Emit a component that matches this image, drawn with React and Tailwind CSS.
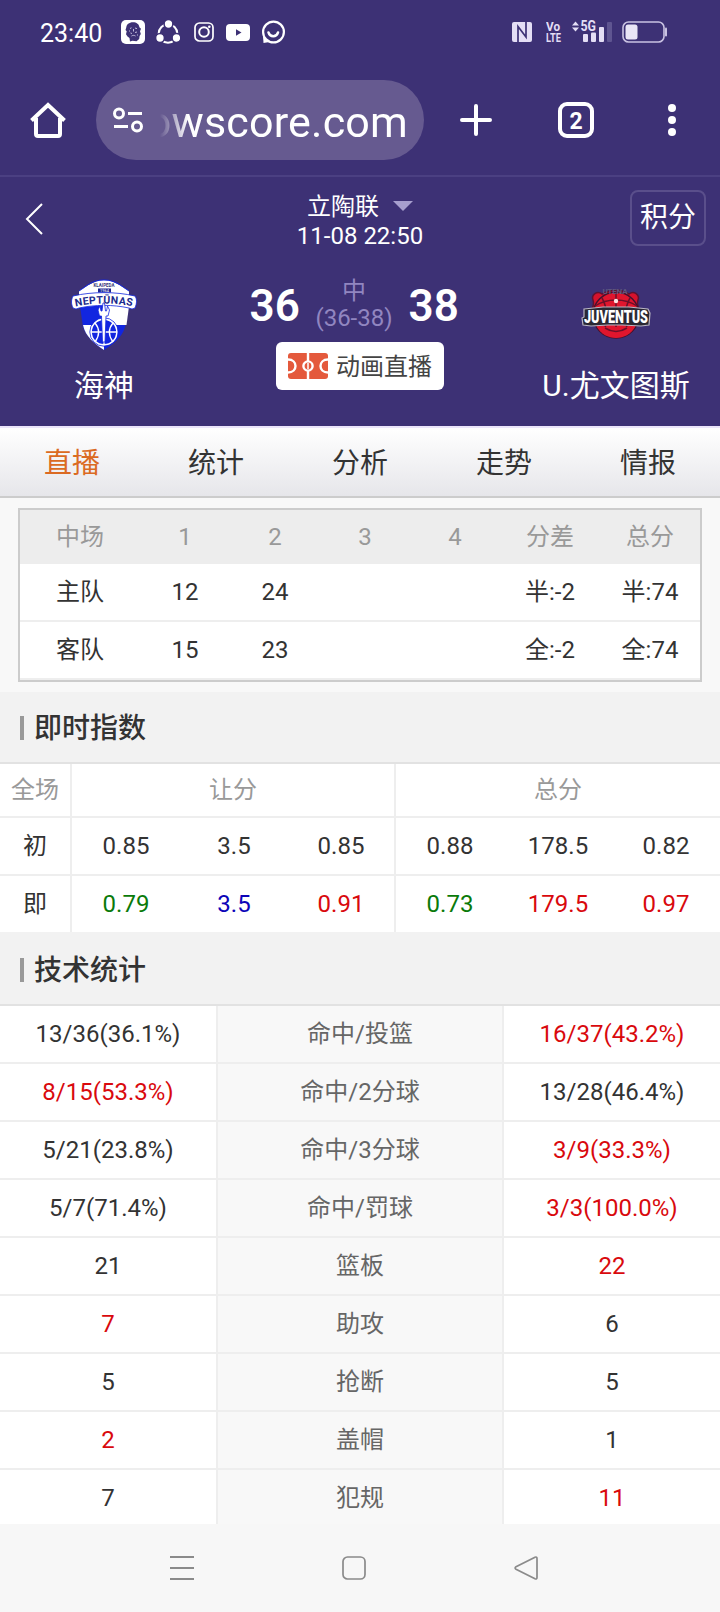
import React from 'react';

const tabs = ['直播', '统计', '分析', '走势', '情报'];

const quarters = [
  ['主队', '12', '24', '', '', '半:-2', '半:74'],
  ['客队', '15', '23', '', '', '全:-2', '全:74'],
];

const RED = 'text-[#d9090d]';
const DARK = 'text-[#333]';

const odds = [
  {
    label: '初',
    cells: [
      ['0.85', DARK],
      ['3.5', DARK],
      ['0.85', DARK],
      ['0.88', DARK],
      ['178.5', DARK],
      ['0.82', DARK],
    ],
  },
  {
    label: '即',
    cells: [
      ['0.79', 'text-[#0a7a0a]'],
      ['3.5', 'text-[#0c04b8]'],
      ['0.91', RED],
      ['0.73', 'text-[#0a7a0a]'],
      ['179.5', RED],
      ['0.97', RED],
    ],
  },
];

// lead: which side has the better number
const stats = [
  { name: '命中/投篮', home: '13/36(36.1%)', away: '16/37(43.2%)', lead: 'away' },
  { name: '命中/2分球', home: '8/15(53.3%)', away: '13/28(46.4%)', lead: 'home' },
  { name: '命中/3分球', home: '5/21(23.8%)', away: '3/9(33.3%)', lead: 'away' },
  { name: '命中/罚球', home: '5/7(71.4%)', away: '3/3(100.0%)', lead: 'away' },
  { name: '篮板', home: '21', away: '22', lead: 'away' },
  { name: '助攻', home: '7', away: '6', lead: 'home' },
  { name: '抢断', home: '5', away: '5', lead: null },
  { name: '盖帽', home: '2', away: '1', lead: 'home' },
  { name: '犯规', home: '7', away: '11', lead: 'away' },
];

const StatusBar = () => (
  <div className="flex h-16 items-center pl-10 pr-[52px]">
    <span className="w-[65px] whitespace-nowrap pt-0.5 text-[25px] leading-none">23:40</span>
    <div className="ml-4 flex items-center">
      <svg width="24" height="24" viewBox="0 0 24 24">
        <rect width="24" height="24" rx="5" fill="#fff" />
        <path
          d="M12 2.200c-4 0-6.600 2.200-6.800 5.600L4.500 10l1.200 1.200-.7 3 1.500 2.400L8.500 18l.5 3.500 2.500-.8 4 .6 2.700-2.300.4-3 1.200-2-.8-2.800 1-2.500-1.600-1.400C18.200 4.200 15.500 2.200 12 2.200z"
          fill="#3d3175"
        />
        <path
          d="M9 8.500l1.500-.7M14 8l2 .6M12.500 9v2.500M9.500 13l1.500.5M14 12.500l2-.5M10.500 16c1.200-.8 2.800-.8 4 0M8 11h1M16 15h1"
          stroke="#cfc9e6"
          strokeWidth=".9"
          fill="none"
        />
      </svg>
      <svg className="ml-[11px]" width="24" height="24" viewBox="0 0 24 24">
        <circle cx="12" cy="13.500" r="9.300" fill="none" stroke="#fff" strokeWidth="2" />
        <g fill="#fff" stroke="#3d3175" strokeWidth="1.500">
          <circle cx="12.500" cy="4" r="4.400" />
          <circle cx="4" cy="18" r="4.400" />
          <circle cx="20.500" cy="18" r="4.400" />
        </g>
      </svg>
      <svg className="ml-[14px]" width="20" height="20" viewBox="0 0 20 20" fill="none" stroke="#fff">
        <rect x="1" y="1" width="18" height="18" rx="4.500" strokeWidth="1.700" />
        <circle cx="10" cy="10" r="4.800" strokeWidth="2" />
        <circle cx="15.300" cy="4.700" r="1.300" fill="#fff" stroke="none" />
      </svg>
      <svg className="ml-3" width="24" height="17" viewBox="0 0 24 17">
        <rect width="24" height="17" rx="4" fill="#fff" />
        <path d="M10 5.300v6.400l5.500-3.200z" fill="#3d3175" />
      </svg>
      <svg className="ml-[11px]" width="24" height="24" viewBox="0 0 24 24" fill="none" stroke="#fff">
        <circle cx="12.500" cy="12" r="10.400" strokeWidth="2.200" />
        <path d="M2 16l.5 7 6-1z" fill="#fff" stroke="none" />
        <path d="M7.500 12.500c1.500 5 8 5 9.500 0" strokeWidth="2.600" strokeLinecap="round" />
      </svg>
    </div>
    <div className="ml-auto flex items-center">
      <svg width="20" height="20" viewBox="0 0 20 20">
        <rect width="20" height="20" rx="2" fill="#e4def5" />
        <path d="M6 20V4.500L14 15V0" fill="none" stroke="#3d3175" strokeWidth="1.700" />
      </svg>
      <svg className="ml-3.5" width="16" height="20" viewBox="0 0 16 20" fill="#e4def5" fontFamily="Roboto" fontWeight="700">
        <text x="0" y="9" fontSize="12" textLength="14" lengthAdjust="spacingAndGlyphs">
          Vo
        </text>
        <text x="0" y="19.500" fontSize="12.500" textLength="15" lengthAdjust="spacingAndGlyphs">
          LTE
        </text>
      </svg>
      <svg className="ml-2.5" width="40" height="24" viewBox="0 0 40 24" fill="#e4def5">
        <path d="M0 5.500L3.500 1.500 7 5.500zM0 7.500L3.500 11.500 7 7.500z" />
        <text x="8.500" y="11" fontSize="14" fontWeight="700" fontFamily="Roboto" textLength="15.500" lengthAdjust="spacingAndGlyphs">
          5G
        </text>
        <rect x="11" y="14" width="5" height="8" rx="1" />
        <rect x="19" y="12.500" width="5" height="9.500" rx="1" />
        <rect x="27" y="7" width="5" height="15" rx="1" />
        <rect x="35" y="2" width="5" height="20" rx="1" fill="#5f5591" />
      </svg>
      <svg className="ml-2.5" width="46" height="22" viewBox="0 0 46 22">
        <rect x="1" y="1" width="41" height="20" rx="5.500" fill="none" stroke="#c9c2e2" strokeWidth="1.600" />
        <rect x="3.500" y="3.500" width="12" height="15" rx="2.500" fill="#e9e5f6" />
        <path d="M44 7.500v7" stroke="#c9c2e2" strokeWidth="2" strokeLinecap="round" />
      </svg>
    </div>
  </div>
);

const BrowserBar = () => (
  <div className="flex h-[113px] items-start border-b-2 border-[#4b4082] pt-4">
    <svg className="ml-7 mt-5" width="40" height="40" viewBox="0 0 40 40" fill="none" stroke="#fff" strokeWidth="4">
      <path d="M3.500 20.500L20 5l16.500 15.500" />
      <path d="M8 18v16a2 2 0 0 0 2 2h20a2 2 0 0 0 2-2V18" />
    </svg>
    <div className="ml-7 flex h-20 w-[328px] items-center rounded-full bg-[#665a90] pl-4">
      <svg width="32" height="26" viewBox="0 0 32 26" fill="none" stroke="#fff" strokeWidth="3">
        <circle cx="7" cy="6.500" r="4.500" />
        <path d="M16 6.500h14M2 19.500h14" />
        <circle cx="25" cy="19.500" r="4.500" />
      </svg>
      <div className="flex h-16 w-[264px] items-center justify-end pt-1 [mask-image:linear-gradient(to_right,transparent_16px,#000_44px)]">
        <span className="whitespace-nowrap text-[43px] leading-none tracking-[0.2px]">owscore.com</span>
      </div>
    </div>
    <svg className="ml-9 mt-6" width="32" height="32" viewBox="0 0 32 32" stroke="#fff" strokeWidth="4" strokeLinecap="round">
      <path d="M16 2v28M2 16h28" />
    </svg>
    <div className="ml-[66px] mt-[22px] flex h-9 w-9 items-center justify-center rounded-[9px] border-4 border-white pt-0.5 text-[23px] font-bold leading-none">
      2
    </div>
    <div className="ml-[74px] mt-6 flex flex-col gap-1">
      <span className="h-2 w-2 rounded-full bg-white" />
      <span className="h-2 w-2 rounded-full bg-white" />
      <span className="h-2 w-2 rounded-full bg-white" />
    </div>
  </div>
);

const NeptunasLogo = () => (
  <svg width="68" height="72" viewBox="0 0 68 72">
    <path d="M9 20L13 48C17 59 26 66 34 71C42 66 52 59 55 48L60 20z" fill="#1226e0" />
    <path d="M34 20v26h22.500L60 20z" fill="#fff" />
    <path d="M34 46H13C15.500 58 25 65 34 71z" fill="#fff" />
    <path d="M9 12C17 7 25 1 34 1s17 6 25 11v9H9z" fill="#fff" />
    <path d="M9 12C17 7 22 1 34 1s17 6 25 11" fill="none" stroke="#1226e0" strokeWidth="1" />
    <text x="34" y="8" fontSize="4.500" fontFamily="Roboto" fontWeight="700" textAnchor="middle" fill="#3a3a7c" textLength="21">
      KLAIPEDA
    </text>
    <rect x="28" y="9.500" width="13" height="4" fill="#1c2490" />
    <text x="34.500" y="13" fontSize="4" fontFamily="Roboto" textAnchor="middle" fill="#fff">
      1964
    </text>
    <path
      d="M3 17C22 12.500 46 12.500 65 17c2 3 2 7 0 12q-3 2-6 0C43 25.500 25 25.500 9 29q-3 2-6 0C1 25 1 21 3 17z"
      fill="#fff"
      stroke="#1226e0"
      strokeWidth=".8"
    />
    <circle cx="34" cy="53" r="13" fill="#1226e0" stroke="#fff" strokeWidth="1.800" />
    <circle cx="34" cy="53" r="14.200" fill="none" stroke="#1226e0" strokeWidth=".8" />
    <path d="M21 53h26M25 44c5 6 5 12 0 19M43 44c-5 6-5 12 0 19M34 40v26" fill="none" stroke="#fff" strokeWidth="1.300" />
    <path
      d="M32.500 63l-1-26h-2l-1.500-6 2-4 1 5h1l1-8h1.500l1 8h1l1-5 2 4-1.500 6h-2l-1 26z"
      fill="#fff"
      stroke="#1226e0"
      strokeWidth=".8"
    />
    <path id="nep-arc" d="M5.500 27.500Q34 21.500 64 27.500" fill="none" />
    <text fontSize="10.500" fontFamily="Roboto" fontWeight="700" fill="#1b2a8c">
      <textPath href="#nep-arc" startOffset="0" textLength="57">
        NEPTŪNAS
      </textPath>
    </text>
  </svg>
);

const JuventusLogo = () => (
  <svg className="overflow-visible" width="70" height="54" viewBox="0 0 70 54">
    <path
      d="M12 14c-2-5 4-10 9-6 8-5 20-5 27 0 5-4 11 1 9 6-1 3-1 5 1 9v10H11V23c2-4 2-6 1-9z"
      fill="#d5122c"
      stroke="#5c1330"
      strokeWidth="1.500"
    />
    <circle cx="35" cy="29" r="23" fill="#e0162e" stroke="#43122f" strokeWidth="1.500" />
    <path
      d="M35 7v44M14 20c12-8 30-8 42 0M21 12c6 10 6 28 0 36M49 12c-6 10-6 28 0 36"
      fill="none"
      stroke="#6b1029"
      strokeWidth="1.500"
    />
    <path d="M16 41c4 7 11 11 19 11s15-4 19-11z" fill="#e0162e" />
    <path d="M24 42q11 7 22 0" fill="none" stroke="#6b1029" strokeWidth="1.500" />
    <circle cx="35" cy="15" r="2.200" fill="#ffe4e4" />
    <text x="34" y="8" fontSize="8" fontFamily="Roboto" fontWeight="700" textAnchor="middle" fill="#5d5980" textLength="25">
      UTENA
    </text>
    <path
      d="M3 23l19-2h26l19 2 2 4-1 12-8 1-19-1H27l-17 1-8-1-1-7 2-1z"
      fill="#2a2833"
      stroke="#b9b6c4"
      strokeWidth="1.200"
    />
    <text
      x="3"
      y="37"
      fontSize="18"
      fontFamily="Roboto"
      fontWeight="900"
      fill="#fff"
      textLength="64"
      lengthAdjust="spacingAndGlyphs"
    >
      JUVENTUS
    </text>
  </svg>
);

const CourtIcon = () => (
  <svg width="40" height="26" viewBox="0 0 40 26">
    <rect width="40" height="26" rx="3" fill="#e4593c" />
    <g fill="none" stroke="#fff" strokeWidth="2.400">
      <path d="M20 0v26" />
      <circle cx="20" cy="13" r="4.600" fill="#e4593c" />
      <path d="M0 6.500c10 0 10 13 0 13M40 6.500c-10 0-10 13 0 13" />
    </g>
    <path d="M20 10v6" stroke="#fff" strokeWidth="1.500" />
  </svg>
);

const MatchHeader = () => (
  <div className="h-[249px]">
    <div className="flex h-[78px] justify-between">
      <div className="w-[90px] pl-[25px] pt-[26px]">
        <svg width="18" height="32" viewBox="0 0 18 32" fill="none" stroke="#fff" strokeWidth="2">
          <path d="M17 1L2 16l15 15" />
        </svg>
      </div>
      <div className="flex flex-col items-center pt-4 text-2xl leading-[29px]">
        <div className="flex items-center">
          <span>立陶联</span>
          <svg className="mb-1 ml-3.5" width="20" height="10" viewBox="0 0 20 10">
            <path d="M0 0h20L10 10z" fill="#a79fce" />
          </svg>
        </div>
        <div>11-08 22:50</div>
      </div>
      <div className="w-[90px] pt-[13px]">
        <button className="flex h-14 w-[76px] items-center justify-center rounded-lg border-2 border-[#5a4f8b] text-[28px] leading-none">积分</button>
      </div>
    </div>
    <div className="flex">
      <div className="flex w-[208px] flex-col items-center">
        <div className="flex h-[112px] items-start pt-6">
          <NeptunasLogo />
        </div>
        <div className="text-[30px] leading-[38px]">海神</div>
      </div>
      <div className="flex w-[304px] flex-col items-center">
        <div className="flex h-[87px] items-start pr-3 pt-[22px]">
          <span className="w-[50px] text-center text-[44px] font-semibold leading-[58px]">36</span>
          <div className="flex w-[109px] flex-col items-center pt-px text-2xl leading-[27px] text-[#9186c0]">
            <span>中</span>
            <span>(36-38)</span>
          </div>
          <span className="w-[50px] text-center text-[44px] font-semibold leading-[58px]">38</span>
        </div>
        <button className="flex h-12 w-[168px] items-center rounded-md bg-white pl-3 text-2xl leading-none text-[#444]">
          <CourtIcon />
          <span className="ml-2 pt-0.5">动画直播</span>
        </button>
      </div>
      <div className="flex w-[208px] flex-col items-center">
        <div className="flex h-[112px] items-start pt-[31px]">
          <JuventusLogo />
        </div>
        <div className="text-[30px] leading-[38px]">U.尤文图斯</div>
      </div>
    </div>
  </div>
);

const QuarterTable = () => (
  <div className="h-[194px] bg-[#f8f8f8] px-[18px] pt-2.5">
    <div className="border-2 border-[#ccc] bg-white">
      <div className="grid h-[54px] grid-cols-[120px_repeat(4,90px)_100px_100px] items-center bg-[#ededed] pb-px text-center text-[#999]">
        {['中场', '1', '2', '3', '4', '分差', '总分'].map((h) => (
          <span key={h}>{h}</span>
        ))}
      </div>
      {quarters.map((row) => (
        <div
          key={row[0]}
          className="grid h-[58px] grid-cols-[120px_repeat(4,90px)_100px_100px] items-center border-b-2 border-[#eee] text-center"
        >
          {row.map((cell, i) => (
            <span key={i}>{cell}</span>
          ))}
        </div>
      ))}
    </div>
  </div>
);

const SectionTitle = ({ children, className }) => (
  <div className={`flex items-center border-b-2 border-[#e2e2e2] bg-[#f2f2f2] pl-5 ${className}`}>
    <span className="h-6 w-1 bg-[#999]" />
    <h2 className="ml-2.5 pt-px text-[28px] font-medium leading-none">{children}</h2>
  </div>
);

const OddsTable = () => (
  <div className="h-[168px] overflow-hidden bg-white text-center">
    <div className="grid h-[54px] grid-cols-[72px_324px_324px] border-b-2 border-[#eee] leading-[52px] text-[#999]">
      <span className="border-r-2 border-[#eee]">全场</span>
      <span className="border-r-2 border-[#eee]">让分</span>
      <span>总分</span>
    </div>
    {odds.map((row) => (
      <div key={row.label} className="grid h-[58px] grid-cols-[72px_repeat(6,108px)] border-b-2 border-[#eee] leading-[56px]">
        <span className="border-r-2 border-[#eee]">{row.label}</span>
        {row.cells.map(([value, color], i) => (
          <span key={i} className={`${color} ${i === 2 ? 'border-r-2 border-[#eee]' : ''}`}>
            {value}
          </span>
        ))}
      </div>
    ))}
  </div>
);

const StatsTable = () => (
  <div className="h-[518px] overflow-hidden bg-white text-center">
    {stats.map((s) => (
      <div key={s.name} className="grid h-[58px] grid-cols-[216px_288px_216px] border-b-2 border-[#eee] leading-[56px]">
        <span className={s.lead === 'home' ? RED : DARK}>{s.home}</span>
        <span className="border-x-2 border-[#eee] bg-[#f8f8f8] text-[#666]">{s.name}</span>
        <span className={s.lead === 'away' ? RED : DARK}>{s.away}</span>
      </div>
    ))}
  </div>
);

const NavBar = () => (
  <div className="flex h-[88px] items-center justify-center gap-[148px] bg-[#f7f7f7] pr-3">
    <svg width="24" height="24" viewBox="0 0 24 24" stroke="#8a8a8a" strokeWidth="2">
      <path d="M0 1h24M0 12h24M0 23h24" />
    </svg>
    <svg width="24" height="24" viewBox="0 0 24 24" fill="none" stroke="#8a8a8a" strokeWidth="1.700">
      <rect x="1" y="1" width="22" height="22" rx="4.500" />
    </svg>
    <svg width="24" height="24" viewBox="0 0 24 24" fill="none" stroke="#8a8a8a" strokeWidth="1.700" strokeLinejoin="round">
      <path d="M21 1.200L2 10.800q-1.800 1.200 0 2.400L21 22.800q2 .7 2-1.300v-19q0-2-2-1.300z" />
    </svg>
  </div>
);

const App = () => (
  <div className="h-[1612px] w-[720px] overflow-hidden bg-white font-[Roboto,'Noto_Sans_CJK_SC',sans-serif] text-2xl leading-none text-[#333]">
    <div className="bg-[#3d3175] text-white">
      <StatusBar />
      <BrowserBar />
      <MatchHeader />
    </div>
    <div className="grid h-[72px] grid-cols-5 items-center border-b-2 border-t-2 border-b-[#ccc] border-t-[#ebe5fb] bg-linear-to-b from-white to-[#e6e6ea] pt-1 text-center text-[28px]">
      {tabs.map((tab, i) => (
        <span key={tab} className={i === 0 ? 'text-[#db6a22]' : ''}>
          {tab}
        </span>
      ))}
    </div>
    <QuarterTable />
    <SectionTitle className="h-[72px] pt-0.5">即时指数</SectionTitle>
    <OddsTable />
    <SectionTitle className="h-[74px] pt-1">技术统计</SectionTitle>
    <StatsTable />
    <NavBar />
  </div>
);

export default App;
